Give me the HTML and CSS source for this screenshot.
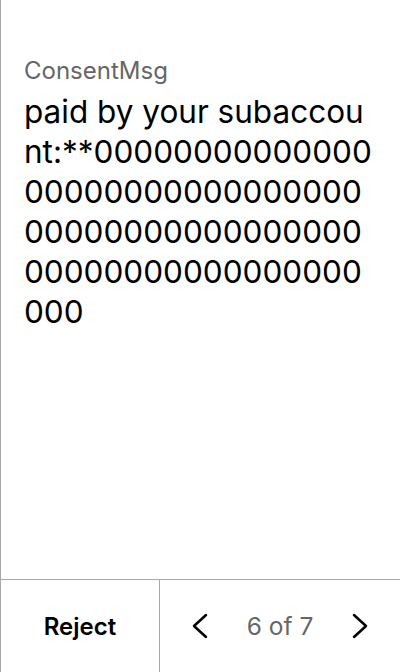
FILE: index.html
```html
<!DOCTYPE html>
<html>
<head>
<meta charset="utf-8">
<link rel="stylesheet" href="styles.css">
</head>
<body>
<div class="screen">
  <main class="content">
    <div class="label">ConsentMsg</div>
    <div class="message">paid by your subaccount:**00000000000000000000000000000000000000000000000000000000000000000000</div>
  </main>
  <footer class="bar">
    <button class="reject">Reject</button>
    <div class="pager">
      <svg class="chev" width="20" height="28" viewBox="0 0 20 28"><path d="M16 3 L4 14 L16 25" fill="none" stroke="#000" stroke-width="2.5" stroke-linecap="round" stroke-linejoin="round"/></svg>
      <span class="count">6 of 7</span>
      <svg class="chev" width="20" height="28" viewBox="0 0 20 28"><path d="M4 3 L16 14 L4 25" fill="none" stroke="#000" stroke-width="2.5" stroke-linecap="round" stroke-linejoin="round"/></svg>
    </div>
  </footer>
</div>
</body>
</html>
```
FILE: styles.css
```css
html, body { margin: 0; padding: 0; background: #fff; }
body { font-family: Inter, "Noto Sans", sans-serif; }
.screen {
  width: 400px; height: 672px; box-sizing: border-box;
  border-left: 1px solid #a8a8a8;
  display: flex; flex-direction: column;
}
.content { flex: 1; padding: 56px 24px 0 23px; }
.label { font-size: 24px; color: #666; line-height: 30px; }
.message {
  margin-top: 6px;
  font-size: 31.5px; line-height: 40px; color: #000;
  word-break: break-all;
}
.bar {
  height: 92px; border-top: 1px solid #a8a8a8;
  display: flex;
}
.reject {
  width: 159px; border: none; border-right: 1px solid #a8a8a8; background: #fff;
  font-family: inherit; font-size: 24px; font-weight: 600; color: #000; padding: 0;
}
.pager { flex: 1; display: flex; align-items: center; justify-content: space-between; padding: 0 30px 0 30px; }
.count { font-size: 24.5px; color: #666; }
.chev { display: block; }
```
